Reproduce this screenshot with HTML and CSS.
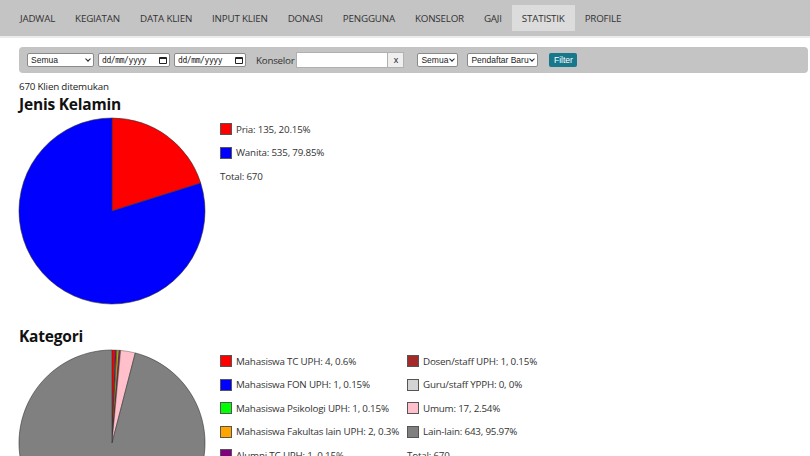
FILE: index.html
```html
<!DOCTYPE html>
<html>
<head>
<meta charset="utf-8">
<link rel="stylesheet" href="styles.css">
</head>
<body>
<nav class="nav">
  <a class="nav-item">JADWAL</a>
  <a class="nav-item">KEGIATAN</a>
  <a class="nav-item">DATA KLIEN</a>
  <a class="nav-item">INPUT KLIEN</a>
  <a class="nav-item">DONASI</a>
  <a class="nav-item">PENGGUNA</a>
  <a class="nav-item">KONSELOR</a>
  <a class="nav-item">GAJI</a>
  <a class="nav-item active">STATISTIK</a>
  <a class="nav-item">PROFILE</a>
</nav>
<main class="content">
  <div class="filter-bar">
    <div class="sel sel-wide"><span>Semua</span><span class="chev"></span></div>
    <div class="date"><span>dd/mm/yyyy</span><span class="cal"></span></div>
    <div class="date"><span>dd/mm/yyyy</span><span class="cal"></span></div>
    <span class="label">Konselor</span>
    <div class="combo"><div class="text-in"></div><div class="xbtn">x</div></div>
    <div class="sel sel-small"><span>Semua</span><span class="chev"></span></div>
    <div class="sel sel-mid"><span>Pendaftar Baru</span><span class="chev"></span></div>
    <div class="btn">Filter</div>
  </div>
  <p class="count">670 Klien ditemukan</p>

  <section class="chart">
    <h2 class="title">Jenis Kelamin</h2>
    <div class="chart-row">
      <svg class="pie" width="188" height="188" viewBox="0 0 188 188">
        <path d="M94,94 L94,1 A93,93 0 0 1 182.71,66.1 Z" fill="#ff0000" stroke="#333" stroke-width="0.6"/>
        <path d="M94,94 L182.71,66.1 A93,93 0 1 1 94,1 Z" fill="#0000ff" stroke="#333" stroke-width="0.6"/>
      </svg>
      <div class="legend">
        <div class="leg"><span class="sw" style="background:#ff0000"></span>Pria: 135, 20.15%</div>
        <div class="leg"><span class="sw" style="background:#0000ff"></span>Wanita: 535, 79.85%</div>
        <div class="leg total">Total: 670</div>
      </div>
    </div>
  </section>

  <section class="chart chart2">
    <h2 class="title">Kategori</h2>
    <div class="chart-row">
      <svg class="pie" width="188" height="188" viewBox="0 0 188 188">
        <path d="M94,94 L94,1 A93,93 0 0 1 97.49,1.065 Z" fill="#ff0000" stroke="#333" stroke-width="0.4"/>
        <path d="M94,94 L97.49,1.065 A93,93 0 0 1 98.36,1.102 Z" fill="#0000ff" stroke="#333" stroke-width="0.4"/>
        <path d="M94,94 L98.36,1.102 A93,93 0 0 1 99.23,1.147 Z" fill="#00ff00" stroke="#333" stroke-width="0.4"/>
        <path d="M94,94 L99.23,1.147 A93,93 0 0 1 100.97,1.261 Z" fill="#ffa500" stroke="#333" stroke-width="0.4"/>
        <path d="M94,94 L100.97,1.261 A93,93 0 0 1 101.84,1.331 Z" fill="#800080" stroke="#333" stroke-width="0.4"/>
        <path d="M94,94 L101.84,1.331 A93,93 0 0 1 102.71,1.408 Z" fill="#a52a2a" stroke="#333" stroke-width="0.4"/>
        <path d="M94,94 L102.71,1.408 A93,93 0 0 1 117.29,3.965 Z" fill="#ffc0cb" stroke="#333" stroke-width="0.4"/>
        <path d="M94,94 L117.29,3.965 A93,93 0 1 1 94,1 Z" fill="#808080" stroke="#333" stroke-width="0.6"/>
      </svg>
      <div class="legend legend-grid">
        <div class="leg"><span class="sw" style="background:#ff0000"></span>Mahasiswa TC UPH: 4, 0.6%</div>
        <div class="leg"><span class="sw" style="background:#a52a2a"></span>Dosen/staff UPH: 1, 0.15%</div>
        <div class="leg"><span class="sw" style="background:#0000ff"></span>Mahasiswa FON UPH: 1, 0.15%</div>
        <div class="leg"><span class="sw" style="background:#d3d3d3"></span>Guru/staff YPPH: 0, 0%</div>
        <div class="leg"><span class="sw" style="background:#00ff00"></span>Mahasiswa Psikologi UPH: 1, 0.15%</div>
        <div class="leg"><span class="sw" style="background:#ffc0cb"></span>Umum: 17, 2.54%</div>
        <div class="leg"><span class="sw" style="background:#ffa500"></span>Mahasiswa Fakultas lain UPH: 2, 0.3%</div>
        <div class="leg"><span class="sw" style="background:#808080"></span>Lain-lain: 643, 95.97%</div>
        <div class="leg"><span class="sw" style="background:#800080"></span>Alumni TC UPH: 1, 0.15%</div>
        <div class="leg total">Total: 670</div>
      </div>
    </div>
  </section>
</main>
</body>
</html>
```
FILE: styles.css
```css
* { box-sizing: border-box; }
body {
  margin: 0;
  font-family: "Open Sans", "Liberation Sans", sans-serif;
  color: #222;
  background: #fff;
  overflow: hidden;
  letter-spacing: -0.2px;
}
.nav {
  display: flex;
  align-items: center;
  height: 38px;
  padding: 5px 0 5px 10px;
  background: #c4c4c4;
  border-bottom: 2px solid #ececec;
}
.nav-item {
  display: flex;
  align-items: center;
  height: 26px;
  padding: 1px 10px 0;
  font-size: 9.8px;
  color: #333;
}
.nav-item.active { background: #dcdcdc; }
.content { padding: 0 2px 0 19px; }
.filter-bar {
  margin-top: 9px;
  height: 26px;
  background: #c4c4c4;
  border-radius: 4px;
  display: flex;
  align-items: center;
  padding: 0 8px;
  font-family: "Liberation Sans", Arial, sans-serif;
  font-size: 8.5px;
  letter-spacing: 0;
  color: #222;
}
.sel, .date {
  height: 14px;
  background: #fff;
  border: 1px solid #8a8a8a;
  border-radius: 2px;
  display: flex;
  align-items: center;
  justify-content: space-between;
  padding: 0 2px 0 3px;
  white-space: nowrap;
}
.sel-wide { width: 67px; }
.sel-small { width: 41px; margin-left: 13px; }
.sel-mid { width: 71px; margin-left: 9px; }
.date { width: 72px; margin-left: 4px; font-family: "DejaVu Sans Mono", monospace; font-size: 8px; letter-spacing: -0.4px; }
.chev {
  width: 4px; height: 4px;
  border-right: 1.2px solid #222;
  border-bottom: 1.2px solid #222;
  transform: rotate(45deg);
  margin-top: -3px;
  margin-right: 1px;
  flex: none;
}
.cal {
  width: 8px; height: 7px;
  border: 1.2px solid #222;
  border-top-width: 2px;
  border-radius: 1px;
  flex: none;
}
.label {
  margin-left: 10px;
  font-family: "Open Sans", sans-serif;
  font-size: 9.8px;
  letter-spacing: -0.25px;
  color: #333;
}
.combo { display: flex; margin-left: 2px; }
.text-in {
  width: 92px; height: 16px;
  background: #fff;
  border: 1px solid #b0b0b0;
}
.xbtn {
  width: 16px; height: 16px;
  background: #efefef;
  border: 1px solid #b0b0b0;
  border-left: none;
  display: flex; align-items: center; justify-content: center;
  font-size: 9px;
}
.btn {
  margin-left: 11px;
  height: 14px;
  width: 28px;
  background: #17788b;
  color: #fff;
  border-radius: 2px;
  display: flex; align-items: center; justify-content: center;
  font-size: 8.5px;
}
.count {
  margin: 6px 0 0;
  font-size: 9.8px;
  color: #222;
  line-height: 15px;
}
.title {
  margin: 0;
  font-size: 15.5px;
  font-weight: 700;
  color: #111;
  line-height: 20px;
  letter-spacing: -0.2px;
}
.chart-row { display: flex; align-items: flex-start; margin-top: 3px; }
.pie { display: block; flex: none; margin-left: -1px; }
.legend {
  margin-left: 14px;
  margin-top: 6px;
  font-size: 9.8px;
  color: #333;
}
.legend-grid {
  display: grid;
  grid-template-columns: 187px auto;
  column-gap: 0;
}
.leg {
  display: flex;
  align-items: center;
  height: 12px;
  margin-bottom: 11.5px;
  white-space: nowrap;
}
.sw {
  width: 12px; height: 12px;
  border: 1px solid #555;
  margin-right: 4px;
  flex: none;
}
.chart2 { margin-top: 21px; }
```
